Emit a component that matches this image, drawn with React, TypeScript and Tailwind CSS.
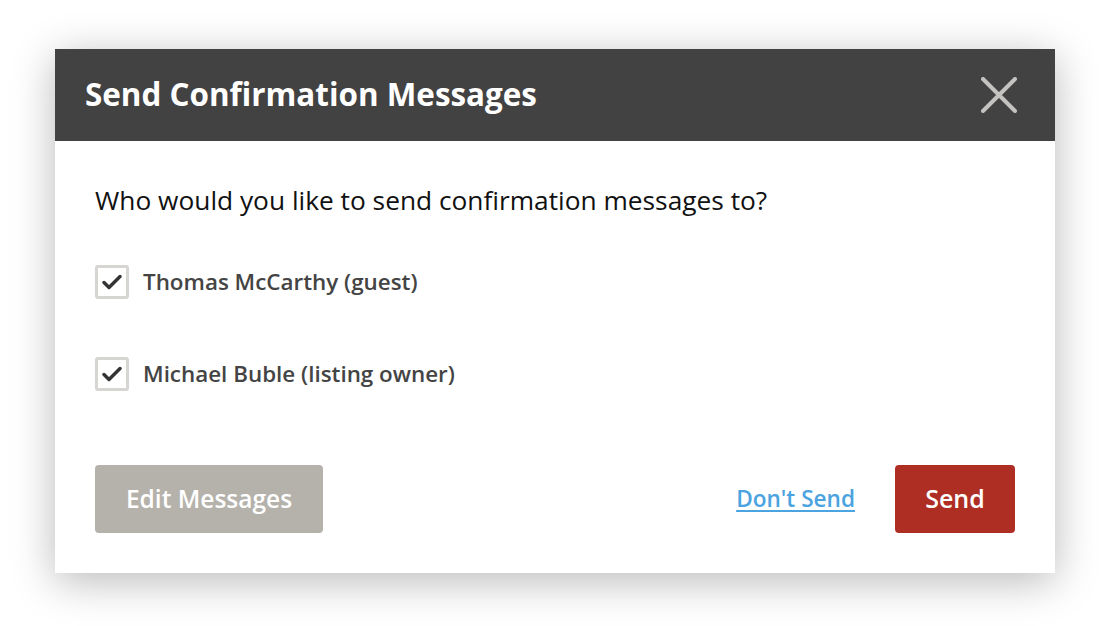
import { useState } from 'react';

function CheckRow({ label, checked, onToggle }: { label: string; checked: boolean; onToggle: () => void }) {
  return (
    <label className="flex items-center gap-[14px] cursor-pointer select-none">
      <button
        type="button"
        onClick={onToggle}
        className="w-[34px] h-[34px] rounded-[3px] border-[3px] border-[#d6d5d1] bg-white flex items-center justify-center"
      >
        {checked && (
          <svg width="20" height="16" viewBox="0 0 20 16" fill="none">
            <path d="M2 8.5L7 13.5L18 2.5" stroke="#333333" strokeWidth="3.4" strokeLinecap="round" strokeLinejoin="round" />
          </svg>
        )}
      </button>
      <span className="text-[22.4px] font-semibold text-[#444444] leading-[30px]">{label}</span>
    </label>
  );
}

export default function App() {
  const [guest, setGuest] = useState(true);
  const [owner, setOwner] = useState(true);

  return (
    <div className="min-h-screen bg-white pt-[49px] pl-[55px]" style={{ fontFamily: '"Open Sans", Lato, sans-serif' }}>
      <div className="w-[1000px] bg-white shadow-[0_8px_40px_rgba(0,0,0,0.28)]">
        <div className="h-[92px] bg-[#424242] flex items-center justify-between pl-[30px] pr-[38px]">
          <h1 className="text-[31.4px] font-bold text-white leading-[40px] -mt-[2px]">Send Confirmation Messages</h1>
          <button type="button" className="w-[36px] h-[36px] flex items-center justify-center">
            <svg width="36" height="36" viewBox="0 0 36 36" fill="none">
              <path d="M2 2L34 34M34 2L2 34" stroke="#c4c3bf" strokeWidth="4" strokeLinecap="round" />
            </svg>
          </button>
        </div>
        <div className="px-[40px] pt-[44px] pb-[40px]">
          <p className="text-[26.3px] text-[#111111] leading-[30px]">Who would you like to send confirmation messages to?</p>
          <div className="mt-[50px] flex flex-col gap-[58px]">
            <CheckRow label="Thomas McCarthy (guest)" checked={guest} onToggle={() => setGuest(!guest)} />
            <CheckRow label="Michael Buble (listing owner)" checked={owner} onToggle={() => setOwner(!owner)} />
          </div>
          <div className="mt-[74px] flex items-center justify-between">
            <button type="button" className="w-[228px] h-[68px] rounded-[4px] bg-[#b5b2ab] text-white text-[24.5px] font-semibold">
              Edit Messages
            </button>
            <div className="flex items-center gap-[40px]">
              <a href="#" className="text-[22.6px] font-semibold text-[#4ba3e0] underline underline-offset-[3px]">
                Don't Send
              </a>
              <button type="button" className="w-[120px] h-[68px] rounded-[4px] bg-[#ae2e24] text-white text-[25px] font-semibold">
                Send
              </button>
            </div>
          </div>
        </div>
      </div>
    </div>
  );
}
